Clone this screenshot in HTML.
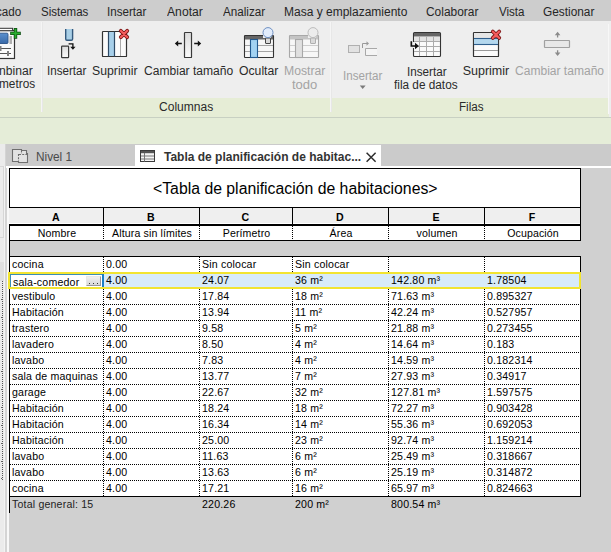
<!DOCTYPE html><html><head><meta charset="utf-8"><style>
*{margin:0;padding:0;box-sizing:border-box}
html,body{width:611px;height:552px;overflow:hidden;background:#d0d0d0;position:relative;
 font-family:"Liberation Sans",sans-serif}
.a{position:absolute}
.t{position:absolute;white-space:nowrap;line-height:1}
.menu{font-size:11.7px;color:#2b2b2b}
.rl{font-size:11.5px;color:#2e2e2e}
.dis{color:#a6a6a6}
.cell{position:absolute;white-space:nowrap;font-size:10.6px;line-height:1;color:#000;letter-spacing:0.18px}
.hd{position:absolute;white-space:nowrap;font-size:10.6px;line-height:1;color:#000;text-align:center;letter-spacing:0.12px}
</style></head><body>
<div class="a" style="left:0;top:0;width:611px;height:21px;background:#cdcdcd"></div>
<div class="a" style="left:0;top:21px;width:611px;height:77px;background:#eeeeee"></div>
<div class="a" style="left:0;top:98px;width:611px;height:19px;background:#e6edd6"></div>
<div class="a" style="left:0;top:117px;width:611px;height:1px;background:#c8d0c2"></div>
<div class="a" style="left:0;top:118px;width:611px;height:26px;background:#e5edd8"></div>
<div class="a" style="left:609px;top:98px;width:2px;height:19px;background:#ededed"></div>
<div class="a" style="left:608px;top:24px;width:1px;height:90px;background:#f7f7f7"></div>
<div class="a" style="left:41px;top:22px;width:1px;height:90px;background:#f5f5f5"></div>
<div class="a" style="left:42px;top:22px;width:1px;height:90px;background:#e7e7e7"></div>
<div class="a" style="left:330px;top:22px;width:1px;height:90px;background:#f5f5f5"></div>
<div class="a" style="left:331px;top:22px;width:1px;height:90px;background:#e7e7e7"></div>
<div class="t" style="left:-4.010000000000002px;top:6px;font-size:12.5px;color:#262626;transform:scaleX(0.93);transform-origin:0 0">cado</div>
<div class="t" style="left:41.28px;top:6px;font-size:12.5px;color:#262626;transform:scaleX(0.92);transform-origin:0 0">Sistemas</div>
<div class="t" style="left:107.27px;top:6px;font-size:12.5px;color:#262626;transform:scaleX(0.9268);transform-origin:0 0">Insertar</div>
<div class="t" style="left:167.0px;top:6px;font-size:12.5px;color:#262626;transform:scaleX(0.973);transform-origin:0 0">Anotar</div>
<div class="t" style="left:223.0px;top:6px;font-size:12.5px;color:#262626;transform:scaleX(0.9333);transform-origin:0 0">Analizar</div>
<div class="t" style="left:284.44px;top:6px;font-size:12.5px;color:#262626;transform:scaleX(0.9598);transform-origin:0 0">Masa y emplazamiento</div>
<div class="t" style="left:426.35px;top:6px;font-size:12.5px;color:#262626;transform:scaleX(0.9537);transform-origin:0 0">Colaborar</div>
<div class="t" style="left:498.8px;top:6px;font-size:12.5px;color:#262626;transform:scaleX(0.9259);transform-origin:0 0">Vista</div>
<div class="t" style="left:542.85px;top:6px;font-size:12.5px;color:#262626;transform:scaleX(0.9472);transform-origin:0 0">Gestionar</div>
<div class="t" style="left:-1.27px;top:65.3px;font-size:12.5px;color:#2a2a2a;transform:scaleX(0.9706);transform-origin:0 0">nbinar</div>
<div class="t" style="left:-0.95px;top:78.3px;font-size:12.5px;color:#2a2a2a;transform:scaleX(0.9459);transform-origin:0 0">metros</div>
<div class="t" style="left:47.37px;top:65.3px;font-size:12.5px;color:#2a2a2a;transform:scaleX(0.9293);transform-origin:0 0">Insertar</div>
<div class="t" style="left:92.02px;top:65.3px;font-size:12.5px;color:#2a2a2a;transform:scaleX(0.98);transform-origin:0 0">Suprimir</div>
<div class="t" style="left:143.53px;top:65.3px;font-size:12.5px;color:#2a2a2a;transform:scaleX(0.9659);transform-origin:0 0">Cambiar tamaño</div>
<div class="t" style="left:238.82px;top:65.3px;font-size:12.5px;color:#2a2a2a;transform:scaleX(0.9769);transform-origin:0 0">Ocultar</div>
<div class="t" style="left:283.52px;top:65.3px;font-size:12.5px;color:#a3a3a3;transform:scaleX(0.9756);transform-origin:0 0">Mostrar</div>
<div class="t" style="left:292.0px;top:79.3px;font-size:12.5px;color:#a3a3a3;transform:scaleX(1.0417);transform-origin:0 0">todo</div>
<div class="t" style="left:342.77px;top:69.7px;font-size:12.5px;color:#a3a3a3;transform:scaleX(0.9268);transform-origin:0 0">Insertar</div>
<div class="t" style="left:406.87px;top:65.5px;font-size:12.5px;color:#2a2a2a;transform:scaleX(0.9341);transform-origin:0 0">Insertar</div>
<div class="t" style="left:394.4px;top:79.3px;font-size:12.5px;color:#2a2a2a;transform:scaleX(0.9433);transform-origin:0 0">fila de datos</div>
<div class="t" style="left:462.7px;top:65.3px;font-size:12.5px;color:#2a2a2a;transform:scaleX(1.0);transform-origin:0 0">Suprimir</div>
<div class="t" style="left:514.64px;top:65.3px;font-size:12.5px;color:#a3a3a3;transform:scaleX(0.9637);transform-origin:0 0">Cambiar tamaño</div>
<div class="t" style="left:158.84px;top:101px;font-size:12.5px;color:#2a2a2a;transform:scaleX(0.9636);transform-origin:0 0">Columnas</div>
<div class="t" style="left:458.77px;top:101px;font-size:12.5px;color:#2a2a2a;transform:scaleX(0.932);transform-origin:0 0">Filas</div>
<svg class="a" style="left:0;top:0" width="611" height="100" viewBox="0 0 611 100"><rect x="-4" y="30.5" width="18.5" height="28" fill="#fafafa" stroke="#333" stroke-width="1.2"/><rect x="-4" y="28.3" width="16.6" height="2.4" fill="#fff" stroke="#333" stroke-width="1"/><defs><linearGradient id="gb" x1="0" y1="0" x2="0" y2="1"><stop offset="0" stop-color="#5a90cf"/><stop offset="1" stop-color="#3a6aa8"/></linearGradient></defs><rect x="-2" y="33.2" width="10" height="10.3" rx="1" fill="url(#gb)" stroke="#2a5288" stroke-width="0.9"/><rect x="9.5" y="36" width="2.5" height="8" fill="#b0b0b0"/><line x1="0" y1="48.5" x2="11" y2="48.5" stroke="#555" stroke-width="1"/><line x1="0" y1="53.5" x2="11" y2="53.5" stroke="#555" stroke-width="1"/><rect x="-1" y="46" width="2.5" height="5" fill="#808080"/><rect x="7" y="51" width="2" height="5" fill="#808080"/><path d="M15.5 28 V38.7 M10.2 33.4 H20.8" stroke="#0b4f10" stroke-width="3.4"/><path d="M15.5 28.8 V37.9 M11 33.4 H20" stroke="#2aae2f" stroke-width="1.8"/><path d="M65.7 29 V39 Q65.7 40.3 67 40.3 H71.3 Q72.6 40.3 72.6 39 V29" fill="#a9cfe6" stroke="#34597d" stroke-width="1.4"/><defs><linearGradient id="gw" x1="0" y1="0" x2="0" y2="1"><stop offset="0" stop-color="#dcdcdc"/><stop offset="1" stop-color="#fbfbfb"/></linearGradient></defs><rect x="61.6" y="46.1" width="7" height="11.6" rx="0.6" fill="url(#gw)" stroke="#3a3a3a" stroke-width="1.2"/><path d="M68.6 43.9 H72.9 V47.5" fill="none" stroke="#111" stroke-width="1.3"/><path d="M70.3 46.8 L75.5 46.8 L72.9 49.8 Z" fill="#111"/><rect x="102.5" y="31.5" width="24" height="25" rx="0.6" fill="#fbfbfb" stroke="#333" stroke-width="1.2"/><rect x="108.5" y="32" width="6" height="24" fill="#a8d0ea"/><line x1="108.5" y1="31.5" x2="108.5" y2="56.5" stroke="#2e4a66" stroke-width="1.2"/><line x1="114.5" y1="31.5" x2="114.5" y2="56.5" stroke="#2e4a66" stroke-width="1.2"/><line x1="120.5" y1="39" x2="120.5" y2="56" stroke="#aaa" stroke-width="1"/><path d="M120.8 30.8 L127.2 37.2 M127.2 30.8 L120.8 37.2" stroke="#7d1515" stroke-width="3.8" stroke-linecap="round"/><path d="M120.8 30.8 L127.2 37.2 M127.2 30.8 L120.8 37.2" stroke="#f45c5c" stroke-width="2.1" stroke-linecap="round"/><rect x="184.5" y="32.5" width="7" height="25" rx="0.6" fill="url(#gw)" stroke="#3a3a3a" stroke-width="1.2"/><path d="M177 43.5 H181.8 M194.2 43.5 H199" stroke="#111" stroke-width="1.4"/><path d="M174.8 43.5 L178.2 40.6 L178.2 46.4 Z" fill="#111"/><path d="M201.2 43.5 L197.8 40.6 L197.8 46.4 Z" fill="#111"/><rect x="244.5" y="35.5" width="29" height="22" rx="0.6" fill="#f7f7f7" stroke="#333" stroke-width="1.1"/><rect x="245" y="36" width="28" height="3.5" fill="#666"/><line x1="245" y1="45.5" x2="273" y2="45.5" stroke="#9a9a9a" stroke-width="0.9"/><line x1="245" y1="51.5" x2="273" y2="51.5" stroke="#9a9a9a" stroke-width="0.9"/><rect x="250.5" y="39.5" width="7" height="18" fill="#a2d2f2" stroke="#22598f" stroke-width="1.1"/><rect x="263" y="30" width="8" height="8" fill="#efefef"/><rect x="265.5" y="38" width="5" height="5.5" rx="0.5" fill="#dadada" stroke="#333" stroke-width="0.9"/><circle cx="268" cy="32.6" r="5" fill="#e2ecfb" stroke="#6f90c2" stroke-width="1"/><rect x="289.5" y="35.5" width="29" height="22" rx="0.6" fill="#f7f7f7" stroke="#a8a8a8" stroke-width="1.1"/><rect x="290" y="36" width="28" height="3.5" fill="#c4c4c4"/><line x1="290" y1="45.5" x2="318" y2="45.5" stroke="#c8c8c8" stroke-width="0.9"/><line x1="290" y1="51.5" x2="318" y2="51.5" stroke="#c8c8c8" stroke-width="0.9"/><rect x="295.5" y="39.5" width="7" height="18" fill="#e0e0e0" stroke="#a8a8a8" stroke-width="1.1"/><rect x="308" y="30" width="8" height="8" fill="#efefef"/><rect x="310.5" y="38" width="5" height="5.5" rx="0.5" fill="#dadada" stroke="#a8a8a8" stroke-width="0.9"/><circle cx="313" cy="32.6" r="5" fill="#ececec" stroke="#bcbcbc" stroke-width="1"/><rect x="348.5" y="45.5" width="11" height="7" fill="#e2e2e2" stroke="#b0b0b0" stroke-width="1"/><path d="M377 48.5 H365.5 V55.5 H377" fill="#f4f4f4" stroke="#a8a8a8" stroke-width="1"/><path d="M362.5 48 V43.5 H367" fill="none" stroke="#999" stroke-width="1"/><path d="M369 43.5 L366.5 41.3 L366.5 45.7 Z" fill="#999"/><path d="M359.8 85.6 L365.6 85.6 L362.7 89 Z" fill="#7a7a7a"/><rect x="413.5" y="32.5" width="27" height="24" rx="1" fill="#fafafa" stroke="#333" stroke-width="1.1"/><rect x="414" y="33" width="26" height="3.5" fill="#666"/><rect x="414" y="37" width="26" height="4.5" fill="#e4e4e4"/><line x1="419.5" y1="36.5" x2="419.5" y2="56" stroke="#ababab" stroke-width="1"/><line x1="426.5" y1="36.5" x2="426.5" y2="56" stroke="#ababab" stroke-width="1"/><line x1="433.5" y1="36.5" x2="433.5" y2="56" stroke="#ababab" stroke-width="1"/><line x1="414" y1="41.5" x2="440" y2="41.5" stroke="#ababab" stroke-width="1"/><line x1="414" y1="46.5" x2="440" y2="46.5" stroke="#ababab" stroke-width="1"/><line x1="414" y1="51.5" x2="440" y2="51.5" stroke="#ababab" stroke-width="1"/><rect x="412.8" y="42" width="1.5" height="6" fill="#efefef"/><path d="M411.3 41.2 V46 H415.5" fill="none" stroke="#111" stroke-width="1.6"/><path d="M419 46 L415 42.8 L415 49.2 Z" fill="#111"/><rect x="473.5" y="32.5" width="25" height="24" rx="0.6" fill="#fbfbfb" stroke="#333" stroke-width="1.2"/><rect x="474" y="38.5" width="24" height="5.8" fill="#b4d8ee"/><rect x="474" y="33" width="24" height="5" fill="#e6e6e6"/><line x1="474" y1="38.5" x2="498" y2="38.5" stroke="#2f5f8c" stroke-width="1.1"/><line x1="474" y1="44.5" x2="498" y2="44.5" stroke="#2f5f8c" stroke-width="1.1"/><line x1="474" y1="50.5" x2="498" y2="50.5" stroke="#999" stroke-width="1"/><path d="M492.8 31.5 L499.2 37.9 M499.2 31.5 L492.8 37.9" stroke="#7d1515" stroke-width="3.8" stroke-linecap="round"/><path d="M492.8 31.5 L499.2 37.9 M499.2 31.5 L492.8 37.9" stroke="#f45c5c" stroke-width="2.1" stroke-linecap="round"/><rect x="544.5" y="40.5" width="25" height="7" rx="0.5" fill="#e8e8e8" stroke="#a0a0a0" stroke-width="1.2"/><path d="M557.6 37.5 V34 M557.6 50.3 V53.8" stroke="#8a8a8a" stroke-width="1.3"/><path d="M557.6 31.8 L554.8 35.2 L560.4 35.2 Z M557.6 56 L554.8 52.6 L560.4 52.6 Z" fill="#8a8a8a"/></svg>
<div class="a" style="left:0;top:144px;width:7px;height:408px;background:#ebebeb"></div>
<div class="a" style="left:0;top:166px;width:5px;height:1px;background:#d8d8d8"></div>
<div class="a" style="left:3px;top:166px;width:1px;height:71px;background:#d6d6d6"></div>
<div class="a" style="left:0;top:237px;width:4px;height:1px;background:#d6d6d6"></div>
<div class="a" style="left:4px;top:166px;width:1px;height:386px;background:#f3f3f3"></div>
<div class="a" style="left:0;top:262px;width:4px;height:19px;background:#e0e0e0"></div>
<div class="a" style="left:2px;top:281px;width:1px;height:200px;background-image:linear-gradient(to bottom,#555 50%,transparent 50%);background-size:1px 2px"></div>
<div class="a" style="left:1px;top:299px;width:1px;height:1px;background:#666"></div>
<div class="a" style="left:1px;top:317px;width:1px;height:1px;background:#666"></div>
<div class="a" style="left:1px;top:335px;width:1px;height:1px;background:#666"></div>
<div class="a" style="left:1px;top:353px;width:1px;height:1px;background:#666"></div>
<div class="a" style="left:1px;top:371px;width:1px;height:1px;background:#666"></div>
<div class="a" style="left:1px;top:389px;width:1px;height:1px;background:#666"></div>
<div class="a" style="left:1px;top:407px;width:1px;height:1px;background:#666"></div>
<div class="a" style="left:1px;top:425px;width:1px;height:1px;background:#666"></div>
<div class="a" style="left:1px;top:443px;width:1px;height:1px;background:#666"></div>
<div class="a" style="left:1px;top:461px;width:1px;height:1px;background:#666"></div>
<div class="a" style="left:1px;top:478px;width:1px;height:1px;background:#666"></div>
<div class="a" style="left:5px;top:144px;width:2px;height:408px;background:#d4d4d4"></div>
<div class="a" style="left:7px;top:166px;width:2px;height:386px;background:#f8f8f8"></div>
<div class="a" style="left:6px;top:144px;width:605px;height:22px;background:#cbcbcb"></div>
<div class="a" style="left:6px;top:166px;width:605px;height:2px;background:#fff"></div>
<svg class="a" style="left:0;top:140px" width="40" height="30" viewBox="0 140 40 30"><path d="M12.5 149.5 H21.5 V150.5 H26.5 V153.5 H27.5 V162.5 H18.5 V161.5 H12.5 Z" fill="#e2e2e2" stroke="#6e6e6e" stroke-width="1.1"/><path d="M21.5 150.5 V154 M18.5 154 V161.5 M19 154.5 H27" fill="none" stroke="#6e6e6e" stroke-width="1.1" stroke-dasharray="2 1.2"/></svg>
<div class="t" style="left:35.5px;top:151px;font-size:12.3px;color:#4a4a4a;transform:scaleX(0.96);transform-origin:0 0">Nivel 1</div>
<div class="a" style="left:135px;top:145px;width:246px;height:21px;background:#fff"></div>
<svg class="a" style="left:139px;top:149px" width="17" height="14" viewBox="0 0 17 14"><rect x="1.5" y="1.5" width="14" height="11" fill="#f4f4f4" stroke="#3a3a3a" stroke-width="1"/><rect x="2" y="2" width="13" height="2.2" fill="#555"/><line x1="5.5" y1="4" x2="5.5" y2="12.5" stroke="#777" stroke-width="1"/><line x1="2" y1="7" x2="15" y2="7" stroke="#777" stroke-width="1"/><line x1="2" y1="10" x2="15" y2="10" stroke="#777" stroke-width="1"/></svg>
<div class="t" style="left:164px;top:151px;font-size:12px;font-weight:bold;color:#333">Tabla de planificación de habitac...</div>
<svg class="a" style="left:365px;top:151px" width="12" height="12" viewBox="0 0 12 12"><path d="M1.6 1.8 L10.6 10.8 M10.6 1.8 L1.6 10.8" stroke="#2e2e2e" stroke-width="1.5"/></svg>
<div class="a" style="left:9px;top:168px;width:572px;height:40px;background:#fff;border:1px solid #000"></div>
<div class="t" style="left:153px;top:181px;font-size:15.8px;color:#000">&lt;Tabla de planificación de habitaciones&gt;</div>
<div class="a" style="left:9px;top:208px;width:572px;height:16px;background:#fff"></div>
<div class="a" style="left:9px;top:208px;width:94px;height:15px;background:#efefef"></div>
<div class="hd" style="left:9px;top:212px;width:94px;font-weight:bold">A</div>
<div class="a" style="left:104px;top:208px;width:95px;height:15px;background:#efefef"></div>
<div class="hd" style="left:103px;top:212px;width:96px;font-weight:bold">B</div>
<div class="a" style="left:200px;top:208px;width:92px;height:15px;background:#efefef"></div>
<div class="hd" style="left:199px;top:212px;width:93px;font-weight:bold">C</div>
<div class="a" style="left:293px;top:208px;width:95px;height:15px;background:#efefef"></div>
<div class="hd" style="left:292px;top:212px;width:96px;font-weight:bold">D</div>
<div class="a" style="left:389px;top:208px;width:95px;height:15px;background:#efefef"></div>
<div class="hd" style="left:388px;top:212px;width:96px;font-weight:bold">E</div>
<div class="a" style="left:485px;top:208px;width:95px;height:15px;background:#efefef"></div>
<div class="hd" style="left:484px;top:212px;width:96px;font-weight:bold">F</div>
<div class="a" style="left:103px;top:208px;width:1px;height:16px;background:#000"></div>
<div class="a" style="left:199px;top:208px;width:1px;height:16px;background:#000"></div>
<div class="a" style="left:292px;top:208px;width:1px;height:16px;background:#000"></div>
<div class="a" style="left:388px;top:208px;width:1px;height:16px;background:#000"></div>
<div class="a" style="left:484px;top:208px;width:1px;height:16px;background:#000"></div>
<div class="a" style="left:580px;top:208px;width:1px;height:16px;background:#000"></div>
<div class="a" style="left:9px;top:224px;width:572px;height:2px;background:#000"></div>
<div class="a" style="left:9px;top:226px;width:572px;height:14px;background:#fff"></div>
<div class="hd" style="left:10px;top:228px;width:94px">Nombre</div>
<div class="hd" style="left:104px;top:228px;width:96px">Altura sin límites</div>
<div class="hd" style="left:200px;top:228px;width:93px">Perímetro</div>
<div class="hd" style="left:293px;top:228px;width:96px">Área</div>
<div class="hd" style="left:389px;top:228px;width:96px">volumen</div>
<div class="hd" style="left:485px;top:228px;width:96px">Ocupación</div>
<div class="a" style="left:9px;top:240px;width:572px;height:1px;background:#000"></div>
<div class="a" style="left:9px;top:256px;width:572px;height:1px;background:#000"></div>
<div class="a" style="left:9px;top:257px;width:572px;height:239px;background:#fff"></div>
<div class="a" style="left:10px;top:272px;width:570px;height:1px;background-image:linear-gradient(to right,#000 50%,transparent 50%);background-size:2px 1px;background-repeat:repeat-x"></div>
<div class="a" style="left:10px;top:288px;width:570px;height:1px;background-image:linear-gradient(to right,#000 50%,transparent 50%);background-size:2px 1px;background-repeat:repeat-x"></div>
<div class="a" style="left:10px;top:304px;width:570px;height:1px;background-image:linear-gradient(to right,#000 50%,transparent 50%);background-size:2px 1px;background-repeat:repeat-x"></div>
<div class="a" style="left:10px;top:320px;width:570px;height:1px;background-image:linear-gradient(to right,#000 50%,transparent 50%);background-size:2px 1px;background-repeat:repeat-x"></div>
<div class="a" style="left:10px;top:336px;width:570px;height:1px;background-image:linear-gradient(to right,#000 50%,transparent 50%);background-size:2px 1px;background-repeat:repeat-x"></div>
<div class="a" style="left:10px;top:352px;width:570px;height:1px;background-image:linear-gradient(to right,#000 50%,transparent 50%);background-size:2px 1px;background-repeat:repeat-x"></div>
<div class="a" style="left:10px;top:368px;width:570px;height:1px;background-image:linear-gradient(to right,#000 50%,transparent 50%);background-size:2px 1px;background-repeat:repeat-x"></div>
<div class="a" style="left:10px;top:384px;width:570px;height:1px;background-image:linear-gradient(to right,#000 50%,transparent 50%);background-size:2px 1px;background-repeat:repeat-x"></div>
<div class="a" style="left:10px;top:400px;width:570px;height:1px;background-image:linear-gradient(to right,#000 50%,transparent 50%);background-size:2px 1px;background-repeat:repeat-x"></div>
<div class="a" style="left:10px;top:416px;width:570px;height:1px;background-image:linear-gradient(to right,#000 50%,transparent 50%);background-size:2px 1px;background-repeat:repeat-x"></div>
<div class="a" style="left:10px;top:432px;width:570px;height:1px;background-image:linear-gradient(to right,#000 50%,transparent 50%);background-size:2px 1px;background-repeat:repeat-x"></div>
<div class="a" style="left:10px;top:448px;width:570px;height:1px;background-image:linear-gradient(to right,#000 50%,transparent 50%);background-size:2px 1px;background-repeat:repeat-x"></div>
<div class="a" style="left:10px;top:464px;width:570px;height:1px;background-image:linear-gradient(to right,#000 50%,transparent 50%);background-size:2px 1px;background-repeat:repeat-x"></div>
<div class="a" style="left:10px;top:480px;width:570px;height:1px;background-image:linear-gradient(to right,#000 50%,transparent 50%);background-size:2px 1px;background-repeat:repeat-x"></div>
<div class="a" style="left:103px;top:226px;width:1px;height:14px;background-image:linear-gradient(to bottom,#000 50%,transparent 50%);background-size:1px 2px;background-repeat:repeat-y"></div>
<div class="a" style="left:103px;top:257px;width:1px;height:239px;background-image:linear-gradient(to bottom,#000 50%,transparent 50%);background-size:1px 2px;background-repeat:repeat-y"></div>
<div class="a" style="left:199px;top:226px;width:1px;height:14px;background-image:linear-gradient(to bottom,#000 50%,transparent 50%);background-size:1px 2px;background-repeat:repeat-y"></div>
<div class="a" style="left:199px;top:257px;width:1px;height:239px;background-image:linear-gradient(to bottom,#000 50%,transparent 50%);background-size:1px 2px;background-repeat:repeat-y"></div>
<div class="a" style="left:292px;top:226px;width:1px;height:14px;background-image:linear-gradient(to bottom,#000 50%,transparent 50%);background-size:1px 2px;background-repeat:repeat-y"></div>
<div class="a" style="left:292px;top:257px;width:1px;height:239px;background-image:linear-gradient(to bottom,#000 50%,transparent 50%);background-size:1px 2px;background-repeat:repeat-y"></div>
<div class="a" style="left:388px;top:226px;width:1px;height:14px;background-image:linear-gradient(to bottom,#000 50%,transparent 50%);background-size:1px 2px;background-repeat:repeat-y"></div>
<div class="a" style="left:388px;top:257px;width:1px;height:239px;background-image:linear-gradient(to bottom,#000 50%,transparent 50%);background-size:1px 2px;background-repeat:repeat-y"></div>
<div class="a" style="left:484px;top:226px;width:1px;height:14px;background-image:linear-gradient(to bottom,#000 50%,transparent 50%);background-size:1px 2px;background-repeat:repeat-y"></div>
<div class="a" style="left:484px;top:257px;width:1px;height:239px;background-image:linear-gradient(to bottom,#000 50%,transparent 50%);background-size:1px 2px;background-repeat:repeat-y"></div>
<div class="a" style="left:104px;top:274px;width:475px;height:13px;background:#d8ebf9"></div>
<div class="a" style="left:10px;top:274px;width:93px;height:13px;background:#fff"></div>
<div class="a" style="left:10px;top:274px;width:93px;height:1px;background:#3b8db5"></div>
<div class="a" style="left:10px;top:274px;width:1px;height:13px;background:#3b8db5"></div>
<div class="a" style="left:102px;top:274px;width:2px;height:13px;background:#1b7fc4"></div>
<div class="a" style="left:86px;top:276px;width:15px;height:10px;background:linear-gradient(#f0f0f0,#d8d8d8);border:1px solid #9a9a9a;border-top-color:#e8e8e8;border-left-color:#e8e8e8"></div>
<div class="a" style="left:89px;top:283px;width:1px;height:1px;background:#333"></div>
<div class="a" style="left:93px;top:283px;width:1px;height:1px;background:#333"></div>
<div class="a" style="left:97px;top:283px;width:1px;height:1px;background:#333"></div>
<div class="cell" style="left:12px;top:259px">cocina</div>
<div class="cell" style="left:106px;top:259px">0.00</div>
<div class="cell" style="left:202px;top:259px">Sin colocar</div>
<div class="cell" style="left:295px;top:259px">Sin colocar</div>
<div class="cell" style="left:13px;top:277px">sala-comedor</div>
<div class="cell" style="left:106px;top:275px">4.00</div>
<div class="cell" style="left:202px;top:275px">24.07</div>
<div class="cell" style="left:295px;top:275px">36 m²</div>
<div class="cell" style="left:391px;top:275px">142.80 m³</div>
<div class="cell" style="left:487px;top:275px">1.78504</div>
<div class="cell" style="left:12px;top:291px">vestibulo</div>
<div class="cell" style="left:106px;top:291px">4.00</div>
<div class="cell" style="left:202px;top:291px">17.84</div>
<div class="cell" style="left:295px;top:291px">18 m²</div>
<div class="cell" style="left:391px;top:291px">71.63 m³</div>
<div class="cell" style="left:487px;top:291px">0.895327</div>
<div class="cell" style="left:12px;top:307px">Habitación</div>
<div class="cell" style="left:106px;top:307px">4.00</div>
<div class="cell" style="left:202px;top:307px">13.94</div>
<div class="cell" style="left:295px;top:307px">11 m²</div>
<div class="cell" style="left:391px;top:307px">42.24 m³</div>
<div class="cell" style="left:487px;top:307px">0.527957</div>
<div class="cell" style="left:12px;top:323px">trastero</div>
<div class="cell" style="left:106px;top:323px">4.00</div>
<div class="cell" style="left:202px;top:323px">9.58</div>
<div class="cell" style="left:295px;top:323px">5 m²</div>
<div class="cell" style="left:391px;top:323px">21.88 m³</div>
<div class="cell" style="left:487px;top:323px">0.273455</div>
<div class="cell" style="left:12px;top:339px">lavadero</div>
<div class="cell" style="left:106px;top:339px">4.00</div>
<div class="cell" style="left:202px;top:339px">8.50</div>
<div class="cell" style="left:295px;top:339px">4 m²</div>
<div class="cell" style="left:391px;top:339px">14.64 m³</div>
<div class="cell" style="left:487px;top:339px">0.183</div>
<div class="cell" style="left:12px;top:355px">lavabo</div>
<div class="cell" style="left:106px;top:355px">4.00</div>
<div class="cell" style="left:202px;top:355px">7.83</div>
<div class="cell" style="left:295px;top:355px">4 m²</div>
<div class="cell" style="left:391px;top:355px">14.59 m³</div>
<div class="cell" style="left:487px;top:355px">0.182314</div>
<div class="cell" style="left:12px;top:371px">sala de maquinas</div>
<div class="cell" style="left:106px;top:371px">4.00</div>
<div class="cell" style="left:202px;top:371px">13.77</div>
<div class="cell" style="left:295px;top:371px">7 m²</div>
<div class="cell" style="left:391px;top:371px">27.93 m³</div>
<div class="cell" style="left:487px;top:371px">0.34917</div>
<div class="cell" style="left:12px;top:387px">garage</div>
<div class="cell" style="left:106px;top:387px">4.00</div>
<div class="cell" style="left:202px;top:387px">22.67</div>
<div class="cell" style="left:295px;top:387px">32 m²</div>
<div class="cell" style="left:391px;top:387px">127.81 m³</div>
<div class="cell" style="left:487px;top:387px">1.597575</div>
<div class="cell" style="left:12px;top:403px">Habitación</div>
<div class="cell" style="left:106px;top:403px">4.00</div>
<div class="cell" style="left:202px;top:403px">18.24</div>
<div class="cell" style="left:295px;top:403px">18 m²</div>
<div class="cell" style="left:391px;top:403px">72.27 m³</div>
<div class="cell" style="left:487px;top:403px">0.903428</div>
<div class="cell" style="left:12px;top:419px">Habitación</div>
<div class="cell" style="left:106px;top:419px">4.00</div>
<div class="cell" style="left:202px;top:419px">16.34</div>
<div class="cell" style="left:295px;top:419px">14 m²</div>
<div class="cell" style="left:391px;top:419px">55.36 m³</div>
<div class="cell" style="left:487px;top:419px">0.692053</div>
<div class="cell" style="left:12px;top:435px">Habitación</div>
<div class="cell" style="left:106px;top:435px">4.00</div>
<div class="cell" style="left:202px;top:435px">25.00</div>
<div class="cell" style="left:295px;top:435px">23 m²</div>
<div class="cell" style="left:391px;top:435px">92.74 m³</div>
<div class="cell" style="left:487px;top:435px">1.159214</div>
<div class="cell" style="left:12px;top:451px">lavabo</div>
<div class="cell" style="left:106px;top:451px">4.00</div>
<div class="cell" style="left:202px;top:451px">11.63</div>
<div class="cell" style="left:295px;top:451px">6 m²</div>
<div class="cell" style="left:391px;top:451px">25.49 m³</div>
<div class="cell" style="left:487px;top:451px">0.318667</div>
<div class="cell" style="left:12px;top:467px">lavabo</div>
<div class="cell" style="left:106px;top:467px">4.00</div>
<div class="cell" style="left:202px;top:467px">13.63</div>
<div class="cell" style="left:295px;top:467px">6 m²</div>
<div class="cell" style="left:391px;top:467px">25.19 m³</div>
<div class="cell" style="left:487px;top:467px">0.314872</div>
<div class="cell" style="left:12px;top:483px">cocina</div>
<div class="cell" style="left:106px;top:483px">4.00</div>
<div class="cell" style="left:202px;top:483px">17.21</div>
<div class="cell" style="left:295px;top:483px">16 m²</div>
<div class="cell" style="left:391px;top:483px">65.97 m³</div>
<div class="cell" style="left:487px;top:483px">0.824663</div>
<div class="a" style="left:9px;top:224px;width:1px;height:289px;background:#000"></div>
<div class="a" style="left:580px;top:208px;width:1px;height:33px;background:#000"></div>
<div class="a" style="left:580px;top:256px;width:1px;height:241px;background:#000"></div>
<div class="a" style="left:9px;top:496px;width:572px;height:1px;background:#000"></div>
<div class="a" style="left:8px;top:272px;width:573px;height:2px;background:#f2e431"></div>
<div class="a" style="left:8px;top:287px;width:573px;height:2px;background:#f2e431"></div>
<div class="a" style="left:8px;top:272px;width:2px;height:17px;background:#f2e431"></div>
<div class="a" style="left:579px;top:272px;width:2px;height:17px;background:#f2e431"></div>
<div class="cell" style="left:12px;top:499px;color:#222">Total general: 15</div>
<div class="cell" style="left:202px;top:499px">220.26</div>
<div class="cell" style="left:295px;top:499px">200 m²</div>
<div class="cell" style="left:391px;top:499px">800.54 m³</div>
</body></html>
